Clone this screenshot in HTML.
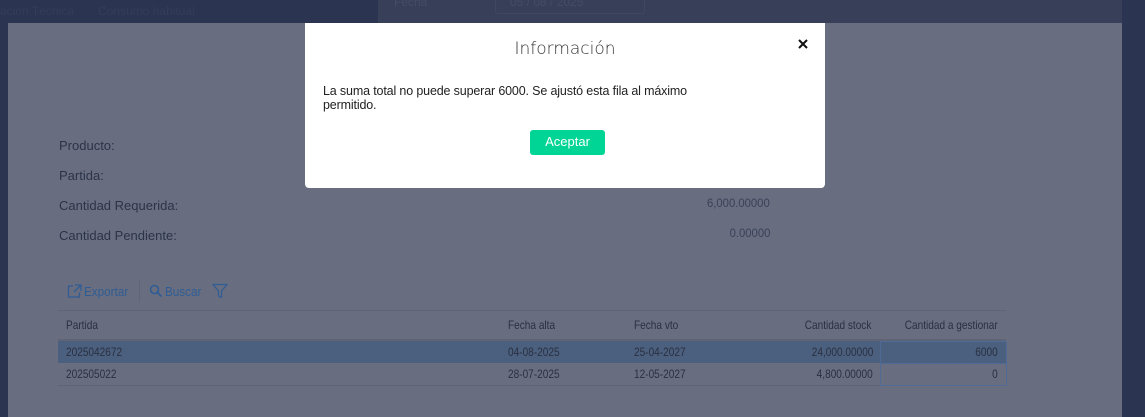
<!DOCTYPE html>
<html><head><meta charset="utf-8"><style>
*{margin:0;padding:0;box-sizing:border-box}
body{width:1145px;height:417px;background:#2b3450;position:relative;overflow:hidden;font-family:"Liberation Sans",sans-serif;font-size:12px;color:#2a3040}
.a{position:absolute;white-space:nowrap}
.t{position:absolute;white-space:nowrap;font-size:12px;transform:scaleX(0.84);transform-origin:left top}
.r{position:absolute;white-space:nowrap;font-size:12px;transform:scaleX(0.84);transform-origin:right top;text-align:right}
.top2{position:absolute;left:378px;top:0;width:744px;height:23px;background:#383f58}
.panel{position:absolute;left:8px;top:23px;width:1114px;height:394px;background:#686e80}
.lbl{color:#2c3347;font-size:13px}
.blue{color:#2f5c94}
.modal{position:absolute;left:305px;top:23px;width:520px;height:165px;background:#fff;border-radius:0 0 4px 4px}
</style></head><body>
<div class="top2"></div>
<div class="a" style="left:0;top:4px;color:#343e58;font-size:12px">ación Técnica</div>
<div class="a" style="left:98px;top:4px;color:#343e58;font-size:12px">Consumo habitual</div>
<div class="a" style="left:394px;top:-5px;color:#454c64;font-size:12px">Fecha</div>
<div class="a" style="left:495px;top:-8px;width:150px;height:22px;border:1px solid #40475f;border-radius:3px"></div>
<div class="a" style="left:510px;top:-5px;color:#454c64;font-size:12px">05 / 08 / 2025</div>
<div class="a" style="left:1127px;top:23px;width:18px;height:394px;background:#2b3450"></div>
<div class="panel"></div>
<div class="a lbl" style="left:59px;top:138px">Producto:</div>
<div class="a lbl" style="left:59px;top:168px">Partida:</div>
<div class="a lbl" style="left:59px;top:198px">Cantidad Requerida:</div>
<div class="a lbl" style="left:59px;top:228px">Cantidad Pendiente:</div>
<div class="r" style="right:375px;top:196px;color:#3a4158;transform:scaleX(0.94)">6,000.00000</div>
<div class="r" style="right:375px;top:226px;color:#3a4158;transform:scaleX(0.94)">0.00000</div>
<svg class="a" style="left:67px;top:284px" width="15" height="14" viewBox="0 0 15 14"><path d="M6 2H1.5v11h11V8.5M8 1h6v6M14 1L7 8" fill="none" stroke="#2f5c94" stroke-width="1.3"/></svg>
<div class="a blue" style="left:84px;top:284px;font-size:13px;transform:scaleX(0.9);transform-origin:left">Exportar</div>
<div class="a" style="left:139px;top:280px;width:1px;height:22px;background:#5f6677"></div>
<svg class="a" style="left:149px;top:284px" width="14" height="14" viewBox="0 0 14 14"><circle cx="5.5" cy="5.5" r="4" fill="none" stroke="#2f5c94" stroke-width="1.6"/><path d="M8.5 8.5L12.5 12.5" stroke="#2f5c94" stroke-width="1.8"/></svg>
<div class="a blue" style="left:165px;top:284px;font-size:13px;transform:scaleX(0.9);transform-origin:left">Buscar</div>
<svg class="a" style="left:212px;top:283px" width="16" height="16" viewBox="0 0 16 16"><path d="M1 1.5h14L9.5 8v6.5L6.5 13V8z" fill="none" stroke="#2f5c94" stroke-width="1.2"/></svg>
<div class="a" style="left:58px;top:310px;width:948px;height:1px;background:#5f6577"></div>
<div class="a" style="left:58px;top:339px;width:948px;height:2px;background:#5e6475"></div>
<div class="a" style="left:58px;top:341px;width:948px;height:22px;background:#4b5f7e"></div>
<div class="a" style="left:58px;top:385px;width:948px;height:1px;background:#5e6475"></div>
<div class="a" style="left:880px;top:341px;width:127px;height:45px;border:1px solid #4f6a95"></div>
<div class="a" style="left:880px;top:363px;width:127px;height:1px;background:#4f6a95"></div>
<div class="t" style="left:66px;top:318px">Partida</div>
<div class="t" style="left:508px;top:318px">Fecha alta</div>
<div class="t" style="left:634px;top:318px">Fecha vto</div>
<div class="r" style="right:274px;top:318px">Cantidad stock</div>
<div class="r" style="right:147px;top:318px">Cantidad a gestionar</div>
<div class="t" style="left:66px;top:345px">2025042672</div>
<div class="t" style="left:508px;top:345px">04-08-2025</div>
<div class="t" style="left:634px;top:345px">25-04-2027</div>
<div class="r" style="right:272px;top:345px">24,000.00000</div>
<div class="r" style="right:147px;top:345px">6000</div>
<div class="t" style="left:66px;top:367px">202505022</div>
<div class="t" style="left:508px;top:367px">28-07-2025</div>
<div class="t" style="left:634px;top:367px">12-05-2027</div>
<div class="r" style="right:272px;top:367px">4,800.00000</div>
<div class="r" style="right:147px;top:367px">0</div>
<div class="modal">
<div class="a" style="left:0;width:520px;text-align:center;top:16px;font-size:17px;color:#333;font-family:'DejaVu Sans',sans-serif;font-weight:300">Información</div>
<svg class="a" style="left:493px;top:16px" width="10" height="10" viewBox="0 0 10 10"><path d="M1 1L9 9M9 1L1 9" stroke="#111" stroke-width="2"/></svg>
<div class="a" style="left:18px;top:61px;font-size:12.5px;color:#222;line-height:14px;white-space:normal;width:400px;letter-spacing:-0.15px">La suma total no puede superar 6000. Se ajustó esta fila al máximo permitido.</div>
<div class="a" style="left:225px;top:107px;width:75px;height:25px;background:#00d595;border-radius:3px;color:#fff;font-size:13px;text-align:center;line-height:24px">Aceptar</div>
</div>
</body></html>
